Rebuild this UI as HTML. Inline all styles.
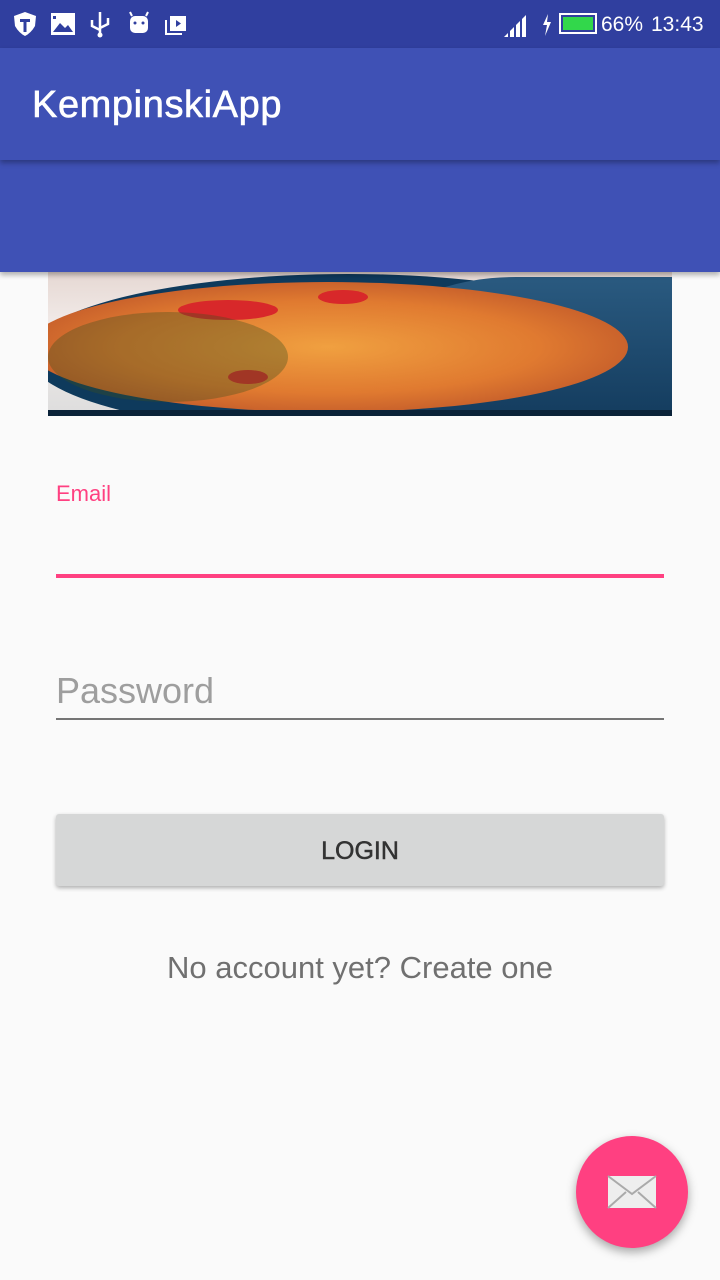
<!DOCTYPE html>
<html><head><meta charset="utf-8"><style>
*{margin:0;padding:0;box-sizing:border-box}
body{width:720px;height:1280px;background:#fafafa;font-family:"Liberation Sans",Roboto,sans-serif;position:relative;overflow:hidden}
.sb{position:absolute;left:0;top:0;width:720px;height:48px;background:#303f9f;color:#fff}
.tb{position:absolute;left:0;top:48px;width:720px;height:112px;background:#3f51b5;box-shadow:0 3px 5px rgba(0,0,0,.3);z-index:2}
.tb2{position:absolute;left:0;top:160px;width:720px;height:112px;background:#3f51b5;box-shadow:0 3px 5px rgba(0,0,0,.3);z-index:1}
.title{position:absolute;left:32px;top:36px;font-size:38px;color:#fff;letter-spacing:0.6px;-webkit-text-stroke:0.6px #fff}
.img{position:absolute;left:48px;top:272px;width:624px;height:144px;overflow:hidden;background:linear-gradient(#e6d8d3,#f2ecea 40%,#ddd)}
</style></head><body>
<div class="sb">
<svg width="720" height="48" style="position:absolute;left:0;top:0">
<path d="M14 16 L25 12 L36 16 L35 26 Q31 33 25 36 Q19 33 15 26 Z" fill="#fff"/><path d="M20 19h10v3h-3.5v10h-3v-10H20z" fill="#303f9f"/>
<rect x="51" y="13" width="24" height="22" fill="#fff"/><path d="M53 32 L60 23 L65 28 L68 25 L73 32Z" fill="#303f9f"/><rect x="53" y="16" width="3" height="3" fill="#303f9f"/>
<path d="M100 12v24M92 20v6l8 4M108 18v6l-8 4" stroke="#fff" stroke-width="2.5" fill="none"/><circle cx="100" cy="35" r="2.5" fill="#fff"/>
<rect x="130" y="16" width="18" height="17" rx="5" fill="#fff"/><circle cx="135" cy="23" r="1.5" fill="#303f9f"/><circle cx="143" cy="23" r="1.5" fill="#303f9f"/><path d="M132 16l-2-4M146 16l2-4" stroke="#fff" stroke-width="2"/>
<rect x="170" y="16" width="16" height="15" fill="#fff"/><path d="M166 20v14h16" stroke="#fff" stroke-width="2" fill="none"/><path d="M176 20v7l5-3.5z" fill="#303f9f"/>
<path d="M504 37h4v-4zM510 37h4v-10l-4 4zM516 37h4v-16l-4 4zM522 37h4v-22l-4 4z" fill="#fff"/>
<path d="M548 14l-5 11h4l-2 11 6-14h-4z" fill="#fff"/>
<rect x="560" y="14" width="36" height="19" fill="none" stroke="#fff" stroke-width="2"/><rect x="563" y="17" width="30" height="13" fill="#32d74b"/>
</svg>
<div style="position:absolute;left:601px;top:13px;font-size:21px">66%</div>
<div style="position:absolute;left:651px;top:13px;font-size:21px">13:43</div>
</div>
<div class="tb"><div class="title">KempinskiApp</div></div>
<div class="tb2"></div>
<div class="img">
<div style="position:absolute;left:-20px;top:2px;width:640px;height:160px;border-radius:50%;background:#0e3a5c"></div>
<div style="position:absolute;left:340px;top:5px;width:320px;height:150px;border-radius:40% 10% 10% 40%;background:linear-gradient(#2a5a80,#123a5c)"></div>
<div style="position:absolute;left:-20px;top:10px;width:600px;height:130px;border-radius:50%;background:radial-gradient(ellipse,#f0a040,#e07a30 50%,#c0582a 80%,#6a3818)"></div>
<div style="position:absolute;left:130px;top:28px;width:100px;height:20px;border-radius:50%;background:#d8282a"></div>
<div style="position:absolute;left:270px;top:18px;width:50px;height:14px;border-radius:50%;background:#d8282a"></div>
<div style="position:absolute;left:180px;top:98px;width:40px;height:14px;border-radius:50%;background:#d8282a"></div>
<div style="position:absolute;left:0;top:40px;width:240px;height:90px;border-radius:50%;background:rgba(60,80,30,.35)"></div>
<div style="position:absolute;left:0;bottom:0;width:624px;height:6px;background:#0a2238"></div>
</div>
<div style="position:absolute;left:56px;top:481px;font-size:22px;color:#ff4081">Email</div>
<div style="position:absolute;left:56px;top:574px;width:608px;height:4px;background:#ff4081"></div>
<div style="position:absolute;left:56px;top:670px;font-size:36px;color:#9e9e9e">Password</div>
<div style="position:absolute;left:56px;top:718px;width:608px;height:2px;background:#757575"></div>
<div style="position:absolute;left:56px;top:814px;width:608px;height:72px;background:#d6d7d7;border-radius:3px;box-shadow:0 2px 4px rgba(0,0,0,.3);text-align:center;line-height:74px;font-size:25px;color:#333;-webkit-text-stroke:0.5px #333">LOGIN</div>
<div style="position:absolute;left:0;top:950px;width:720px;text-align:center;font-size:31px;color:#707070">No account yet? Create one</div>
<div style="position:absolute;left:576px;top:1136px;width:112px;height:112px;border-radius:50%;background:#ff4081;box-shadow:0 4px 10px rgba(0,0,0,.35)">
<svg width="112" height="112"><rect x="32" y="40" width="48" height="32" fill="#eee"/><path d="M32 40l24 18 24-18M32 72l18-16M80 72l-18-16" stroke="#aaa" stroke-width="2" fill="none"/></svg></div>
</body></html>
